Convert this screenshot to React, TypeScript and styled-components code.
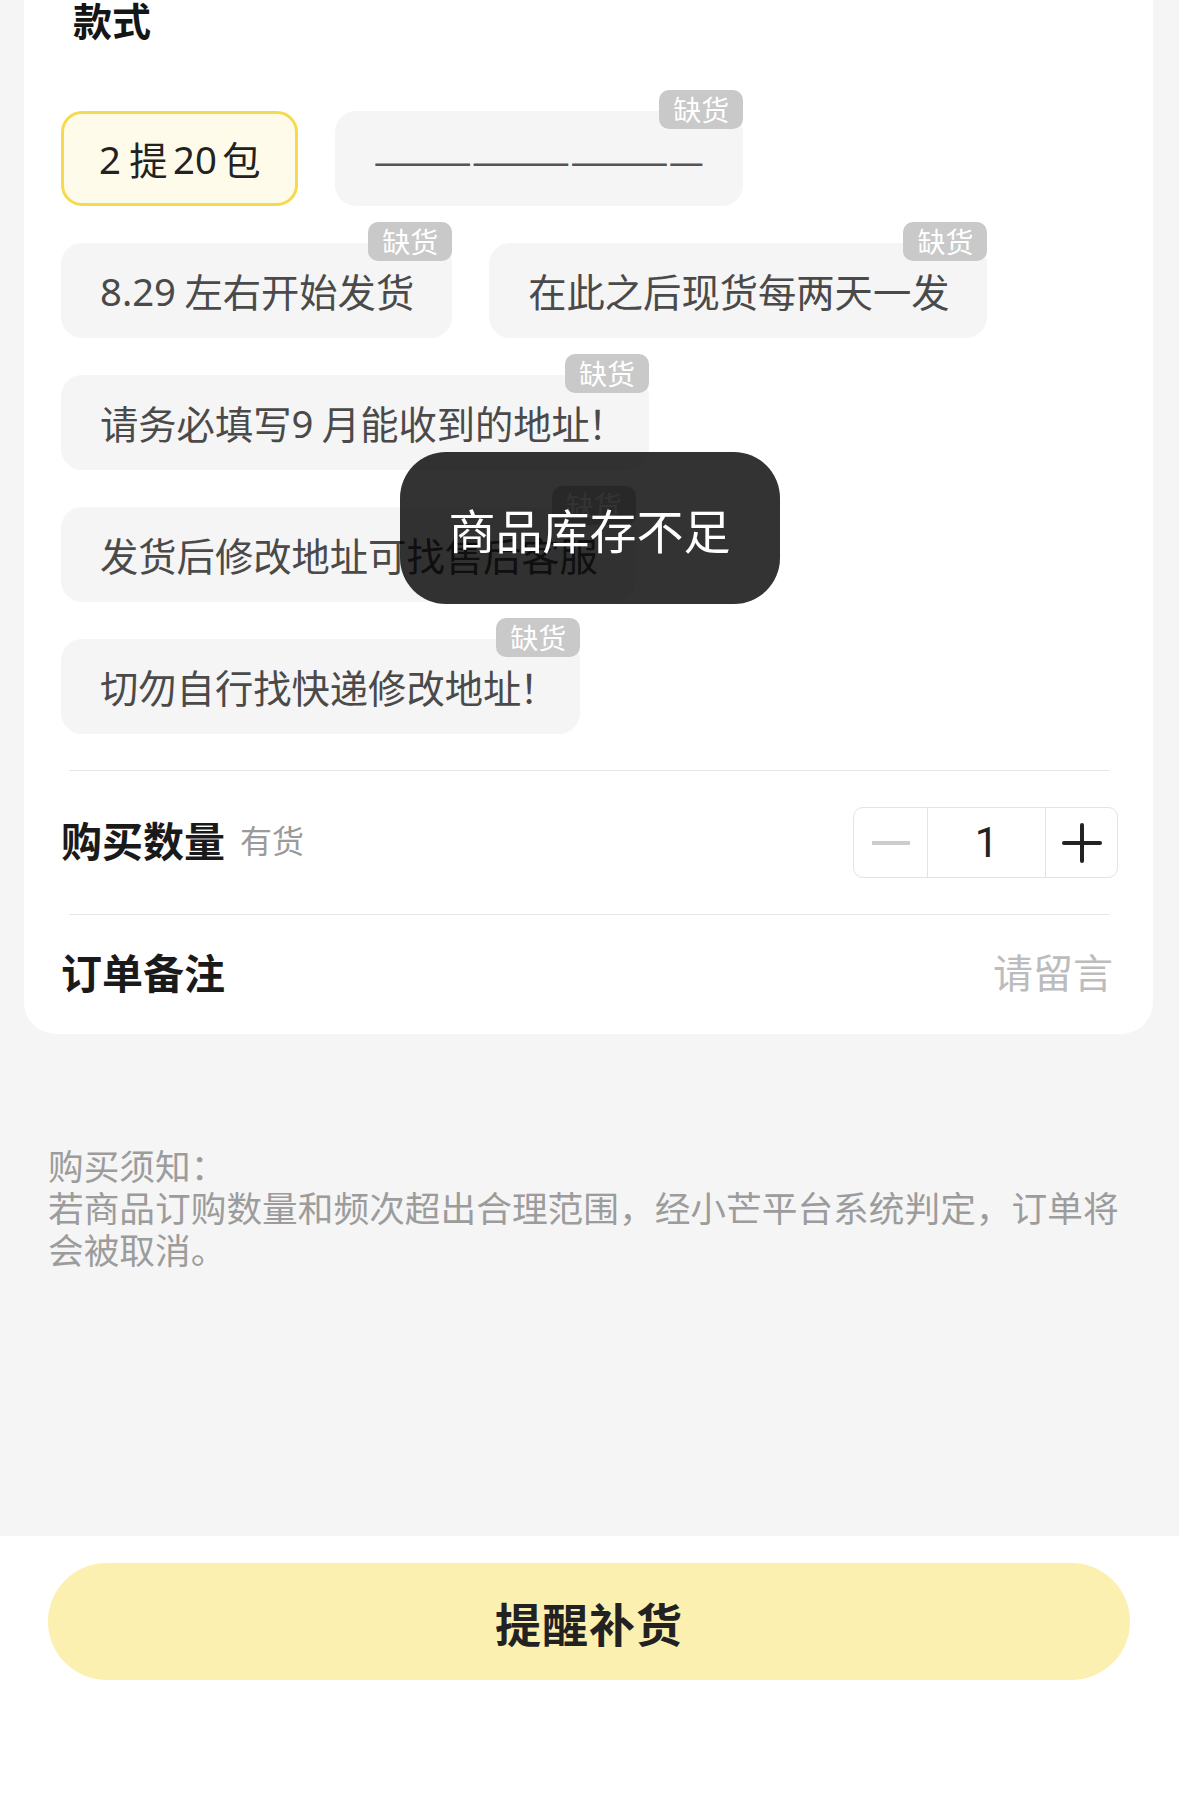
import * as React from 'react';
import styled, { createGlobalStyle, css } from 'styled-components';

const GlobalStyle = createGlobalStyle`
    html, body {
        margin: 0;
        padding: 0;
        background: #f5f5f5;
        font-family: "Noto Sans CJK SC", "Noto Sans", Roboto, sans-serif;
    }
    * {
        box-sizing: border-box;
    }
`;

const Page = styled.div`
    display: flex;
    flex-direction: column;
    height: 1808px;
    background: #f5f5f5;
`;

const Card = styled.div`
    margin: 0 26px 0 24px;
    padding: 0 37px;
    background: #fff;
    border-radius: 0 0 32px 32px;
`;

const Title = styled.div`
    height: 44px;
    padding-left: 12px;
    line-height: 38px;
    font-size: 39px;
    font-weight: 600;
    color: #151515;
`;

const ChipGroup = styled.div`
    display: flex;
    flex-wrap: wrap;
    gap: 37px;
    margin-top: 67px;
`;

const Chip = styled.div<{ $active?: boolean; $dashes?: boolean }>`
    position: relative;
    display: flex;
    align-items: center;
    height: 95px;
    padding: 0 38px 0 39px;
    border-radius: 21px;
    background: #f5f5f5;
    font-size: 38.3px;
    color: #4a4a4a;
    white-space: nowrap;

    ${(p) =>
        p.$active &&
        css`
            padding: 0 35px;
            background: #fffbea;
            border: 3px solid #f5d94f;
            color: #222;
        `}

    ${(p) =>
        p.$dashes &&
        css`
            padding: 0 39px 0 38px;
            font-size: 40px;
            color: #555;
        `}
`;

const Num = styled.span`
    margin: 0 0.14em;
    font-family: "Noto Sans", Roboto, sans-serif;

    &:first-child {
        margin-left: 0;
        margin-right: 0.22em;
    }
`;

const Bang = styled.span`
    margin-left: -0.05em;
    margin-right: -0.4em;
`;

const Badge = styled.span`
    position: absolute;
    top: -21px;
    right: 0;
    height: 39px;
    padding: 0 14px;
    border-radius: 10px;
    background: #c9c9c9;
    color: #fff;
    font-family: "Noto Sans CJK SC", sans-serif;
    font-size: 28px;
    line-height: 39px;
    letter-spacing: 0;
`;

const Divider = styled.div<{ $top?: number }>`
    height: 1px;
    margin: ${(p) => p.$top || 0}px 7px 0 8px;
    background: #e6e6e6;
`;

const Row = styled.div<{ $height: number }>`
    display: flex;
    align-items: center;
    justify-content: space-between;
    height: ${(p) => p.$height}px;
`;

const Label = styled.div`
    display: flex;
    align-items: center;
    margin-bottom: 7px;
    font-size: 41px;
    font-weight: 600;
    color: #1a1a1a;
`;

const Hint = styled.span`
    margin-left: 15px;
    font-size: 32px;
    font-weight: 400;
    color: #9a9a9a;
`;

const Placeholder = styled.span`
    margin: 0 3px 7px 0;
    font-size: 40px;
    color: #bcbcbc;
`;

const Stepper = styled.div`
    display: flex;
    height: 71px;
    margin-right: -2px;
    border: 1.5px solid #e3e3e3;
    border-radius: 10px;
    overflow: hidden;
`;

const StepButton = styled.div<{ $width: number }>`
    display: flex;
    align-items: center;
    justify-content: center;
    width: ${(p) => p.$width}px;
`;

const StepValue = styled.div`
    display: flex;
    align-items: center;
    justify-content: center;
    width: 119px;
    border-left: 1.5px solid #e3e3e3;
    border-right: 1.5px solid #e3e3e3;
    font-family: Roboto, "Noto Sans", sans-serif;
    font-size: 42px;
    color: #222;
`;

const Notice = styled.div`
    margin-top: 110px;
    padding: 0 40px 0 48px;
    font-size: 35.7px;
    line-height: 42px;
    color: #9c9c9c;
`;

const Spacer = styled.div`
    flex: 1;
`;

const BottomBar = styled.div`
    height: 272px;
    padding: 27px 49px 0 48px;
    background: #fff;
`;

const RemindButton = styled.div`
    display: flex;
    align-items: center;
    justify-content: center;
    height: 117px;
    border-radius: 59px;
    background: #fcf0b0;
    font-size: 46px;
    font-weight: 600;
    color: #222;
    letter-spacing: 1px;
`;

const Toast = styled.div`
    position: fixed;
    top: 452px;
    left: 50%;
    transform: translateX(-50%);
    display: flex;
    align-items: center;
    justify-content: center;
    width: 380px;
    height: 152px;
    border-radius: 46px;
    background: rgba(0, 0, 0, 0.8);
    color: #fff;
    font-size: 47px;
`;

const MinusIcon = () => (
    <svg width="38" height="6" viewBox="0 0 38 6">
        <line x1="1" y1="3" x2="37" y2="3" stroke="#cccccc" strokeWidth="4" strokeLinecap="round" />
    </svg>
);

const PlusIcon = () => (
    <svg width="40" height="40" viewBox="0 0 40 40">
        <line x1="2" y1="20" x2="38" y2="20" stroke="#222" strokeWidth="4" strokeLinecap="round" />
        <line x1="20" y1="2" x2="20" y2="38" stroke="#222" strokeWidth="4" strokeLinecap="round" />
    </svg>
);

export default function App() {
    return (
        <Page>
            <GlobalStyle />
            <Card>
                <Title>款式</Title>
                <ChipGroup>
                    <Chip $active>
                        <Num>2</Num>提<Num>20</Num>包
                    </Chip>
                    <Chip $dashes>
                        ——————————
                        <Badge>缺货</Badge>
                    </Chip>
                    <Chip>
                        <Num>8.29</Num>左右开始发货
                        <Badge>缺货</Badge>
                    </Chip>
                    <Chip>
                        在此之后现货每两天一发
                        <Badge>缺货</Badge>
                    </Chip>
                    <Chip>
                        请务必填写<Num>9</Num>月能收到的地址<Bang>！</Bang>
                        <Badge>缺货</Badge>
                    </Chip>
                    <Chip>
                        发货后修改地址可找售后客服
                        <Badge>缺货</Badge>
                    </Chip>
                    <Chip>
                        切勿自行找快递修改地址<Bang>！</Bang>
                        <Badge>缺货</Badge>
                    </Chip>
                </ChipGroup>
                <Divider $top={36} />
                <Row $height={143}>
                    <Label>
                        购买数量<Hint>有货</Hint>
                    </Label>
                    <Stepper>
                        <StepButton $width={73}>
                            <MinusIcon />
                        </StepButton>
                        <StepValue>1</StepValue>
                        <StepButton $width={71}>
                            <PlusIcon />
                        </StepButton>
                    </Stepper>
                </Row>
                <Divider />
                <Row $height={119}>
                    <Label>订单备注</Label>
                    <Placeholder>请留言</Placeholder>
                </Row>
            </Card>
            <Notice>
                购买须知：
                <br />
                若商品订购数量和频次超出合理范围，经小芒平台系统判定，订单将会被取消。
            </Notice>
            <Spacer />
            <BottomBar>
                <RemindButton>提醒补货</RemindButton>
            </BottomBar>
            <Toast>商品库存不足</Toast>
        </Page>
    );
}
